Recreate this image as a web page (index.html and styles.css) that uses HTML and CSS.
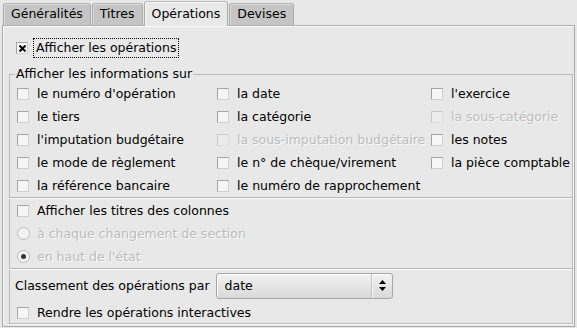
FILE: index.html
```html
<!DOCTYPE html>
<html lang="fr">
<head>
	<meta charset="utf-8">
	<title>Opérations</title>
	<link rel="stylesheet" href="styles.css">
</head>
<body>

<div class="notebook">
	<div class="tabs">
		<div class="tab">Généralités</div>
		<div class="tab">Titres</div>
		<div class="tab active">Opérations</div>
		<div class="tab">Devises</div>
	</div>

	<div class="page">
		<div class="row first">
			<span class="box checked"><svg width="7" height="7" viewBox="0 0 7 7"><path d="M0.5 0.5L6.5 6.5M6.5 0.5L0.5 6.5" stroke="#000" stroke-width="2"/></svg></span>
			<span class="focus">Afficher les opérations</span>
		</div>

		<fieldset class="frame">
			<legend>Afficher les informations sur</legend>

			<div class="grid">
				<div class="row"><span class="box"></span>le numéro d'opération</div>
				<div class="row"><span class="box"></span>la date</div>
				<div class="row"><span class="box"></span>l'exercice</div>

				<div class="row"><span class="box"></span>le tiers</div>
				<div class="row"><span class="box"></span>la catégorie</div>
				<div class="row off"><span class="box"></span>la sous-catégorie</div>

				<div class="row"><span class="box"></span>l'imputation budgétaire</div>
				<div class="row off"><span class="box"></span>la sous-imputation budgétaire</div>
				<div class="row"><span class="box"></span>les notes</div>

				<div class="row"><span class="box"></span>le mode de règlement</div>
				<div class="row"><span class="box"></span>le n° de chèque/virement</div>
				<div class="row"><span class="box"></span>la pièce comptable</div>

				<div class="row"><span class="box"></span>la référence bancaire</div>
				<div class="row"><span class="box"></span>le numéro de rapprochement</div>
				<div class="row"></div>
			</div>

			<div class="sep"></div>

			<div class="row"><span class="box"></span>Afficher les titres des colonnes</div>
			<div class="row off"><span class="radio"></span>à chaque changement de section</div>
			<div class="row off"><span class="radio on"></span>en haut de l'état</div>

			<div class="sep"></div>

			<div class="row combo-row">
				Classement des opérations par
				<div class="combo">
					<span class="combo-text">date</span>
					<span class="combo-arrows"><svg width="9" height="13" viewBox="0 0 9 13"><path d="M4.5 1L8 5H1z M1 8H8L4.5 12z" fill="#000"/></svg></span>
				</div>
			</div>
			<div class="row"><span class="box"></span>Rendre les opérations interactives</div>
		</fieldset>
	</div>
</div>

</body>
</html>
```

FILE: styles.css
```css
* { box-sizing: border-box; }

html, body {
	margin: 0;
	height: 100%;
}

body {
	overflow: hidden;
	background: #e8e8e8;
	color: #000;
	font-family: "DejaVu Sans", Verdana, sans-serif;
	font-size: 12.5px;
}

.tabs {
	display: flex;
	align-items: flex-end;
	height: 25px;
	padding-left: 3px;
}

.tab {
	height: 22px;
	line-height: 20px;
	padding: 0 7px;
	margin-right: 1px;
	background: #c5c5c5;
	border: 1px solid #a9a9a9;
	border-bottom: none;
	border-top-color: #b8b8b8;
	border-radius: 3px 3px 0 0;
	box-shadow: inset 1px 1px 0 #dadada;
}

.tab.active {
	height: 25px;
	line-height: 23px;
	margin-bottom: -1px;
	background: #e8e8e8;
	box-shadow: inset 1px 1px 0 #fafafa;
	position: relative;
}

.page {
	margin: 0 2px 0 2px;
	height: 302px;
	border: 1px solid #a8a8a8;
	border-top-color: #b0b0b0;
	box-shadow: inset 1px 1px 0 #fafafa;
	padding: 11px 3px 0 6px;
}

.row {
	display: flex;
	align-items: center;
	height: 23px;
	padding-left: 7px;
	white-space: nowrap;
}

.row.first {
	height: 22px;
	padding-left: 7px;
	margin-bottom: 7px;
}

.box {
	flex: none;
	width: 12px;
	height: 12px;
	margin-right: 8px;
	display: flex;
	align-items: center;
	justify-content: center;
	background: #f6f6f6;
	border: 1px solid #a4a4a4;
	border-right-color: #cfcfcf;
	border-bottom-color: #cfcfcf;
}

.box.checked {
	background: #fbfbfb;
}

.focus {
	margin-left: -3px;
	padding: 0 2px;
	line-height: 18px;
	border: 1px dotted #000;
}

.radio {
	flex: none;
	width: 13px;
	height: 13px;
	margin-right: 7px;
	border-radius: 50%;
	background: #f2f2f2;
	border: 1px solid #bdbdbd;
	display: flex;
	align-items: center;
	justify-content: center;
}

.radio.on::after {
	content: "";
	width: 5px;
	height: 5px;
	border-radius: 50%;
	background: #333;
}

.off {
	color: #bcbcbc;
	text-shadow: 1px 1px 0 #fafafa;
}

.off .box {
	background: #ececec;
	border-color: #c8c8c8 #dcdcdc #dcdcdc #c8c8c8;
}

.frame {
	margin: 0;
	padding: 0;
	height: 258px;
	width: 564px;
	border: 1px solid #bababa;
	box-shadow: 1px 1px 0 #fafafa;
}

.frame legend {
	padding: 0 1px;
	margin-left: 5px;
	line-height: 16px;
}

.grid {
	display: grid;
	grid-template-columns: 200px 214px auto;
}

.sep {
	height: 2px;
	border-top: 1px solid #b4b4b4;
	border-bottom: 1px solid #fafafa;
	margin: 0 0 0 -1px;
}

.combo-row {
	height: 31px;
	padding-left: 5px;
}

.combo {
	display: flex;
	align-items: center;
	margin-left: 6px;
	width: 177px;
	height: 26px;
	border: 1px solid #a6a6a6;
	border-radius: 3px;
	background: linear-gradient(#f2f2f2, #d9d9d9);
	box-shadow: inset 1px 1px 0 #fff;
}

.combo-text {
	flex: 1;
	padding-left: 8px;
}

.combo-arrows {
	width: 20px;
	height: 24px;
	display: flex;
	align-items: center;
	justify-content: center;
	border-left: 1px solid #f6f6f6;
	box-shadow: -1px 0 0 #c4c4c4;
}
```
